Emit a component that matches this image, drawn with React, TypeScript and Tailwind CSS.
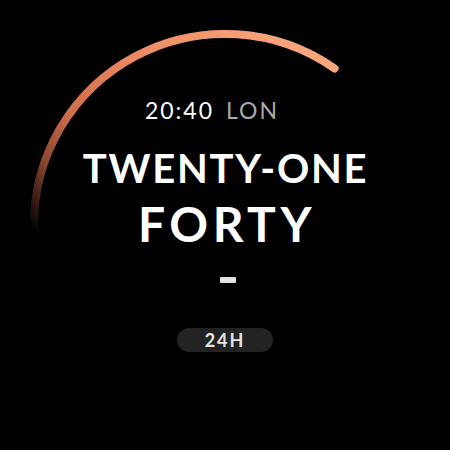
import React from "react";

export default function App() {
  return (
    <div className="relative w-[450px] h-[450px] bg-black overflow-hidden" style={{ fontFamily: "Lato, 'Open Sans', sans-serif" }}>
      <svg className="absolute inset-0" width="450" height="450" viewBox="0 0 450 450">
        <defs>
          <linearGradient id="arcg" gradientUnits="userSpaceOnUse" x1="34" y1="232" x2="300" y2="40">
            <stop offset="0" stopColor="#000000" />
            <stop offset="0.15" stopColor="#8a4632" />
            <stop offset="0.3" stopColor="#d06e4c" />
            <stop offset="0.6" stopColor="#ee8d65" />
            <stop offset="1" stopColor="#f8a67d" />
          </linearGradient>
        </defs>
        <path d="M 34 228 A 191 191 0 0 1 334.6 68.5" fill="none" stroke="url(#arcg)" strokeWidth="8" strokeLinecap="round" />
      </svg>
      <div className="relative flex flex-col items-center pt-[96px]">
        <div className="flex items-baseline gap-[12px] text-[23px] leading-[28px] tracking-[2px] mr-[26px]">
          <span className="text-white">20:40</span>
          <span className="text-[#a9a9a9]">LON</span>
        </div>
        <div className="mt-[22px] text-white font-bold text-[40px] leading-[44px] tracking-[1.7px] ml-[1px]">TWENTY-ONE</div>
        <div className="mt-[8px] text-white font-bold text-[48px] leading-[52px] tracking-[4.5px] ml-[4px]">FORTY</div>
        <div className="mt-[27px] ml-[6px] w-[16px] h-[6px] rounded-[1px] bg-[#e2e2e2]" />
        <div className="mt-[45px] w-[96px] h-[24px] rounded-full bg-[#232323] flex items-center justify-center text-[#e6e6e6] font-bold text-[18px] tracking-[2px]">
          <span className="ml-[0px]">24H</span>
        </div>
      </div>
    </div>
  );
}
